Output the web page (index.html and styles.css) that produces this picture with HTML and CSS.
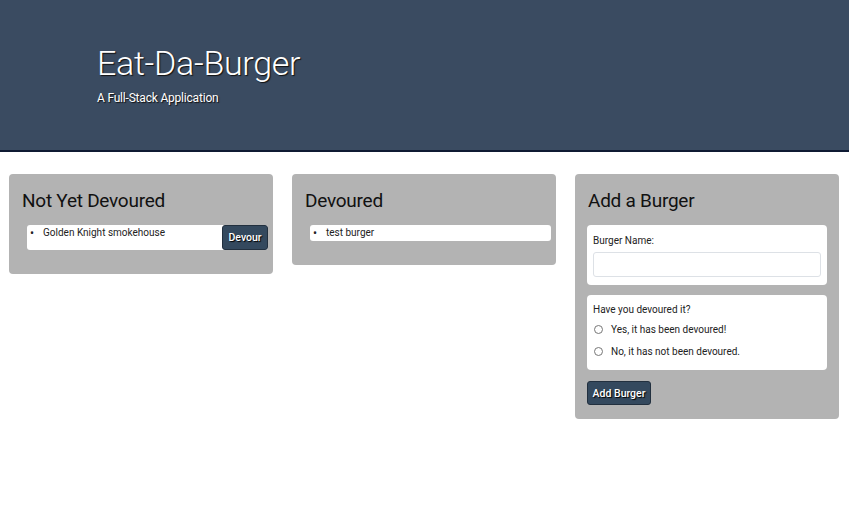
FILE: index.html
```html
<!DOCTYPE html>
<html lang="en">
<head>
<meta charset="utf-8">
<title>Eat-Da-Burger</title>
<link rel="stylesheet" href="styles.css">
</head>
<body>
<header class="hero">
  <h1 class="hero-title">Eat-Da-Burger</h1>
  <p class="hero-sub">A Full-Stack Application</p>
</header>
<main class="columns">
  <section class="card">
    <h2 class="card-title">Not Yet Devoured</h2>
    <ul class="burger-list">
      <li class="burger-item"><span class="burger-name">Golden Knight smokehouse</span><button class="btn btn-devour">Devour</button></li>
    </ul>
  </section>
  <section class="card card-short">
    <h2 class="card-title">Devoured</h2>
    <ul class="burger-list">
      <li class="burger-item"><span class="burger-name">test burger</span></li>
    </ul>
  </section>
  <section class="card">
    <h2 class="card-title">Add a Burger</h2>
    <form class="add-form">
      <div class="form-box">
        <label class="form-label" for="bn">Burger Name:</label>
        <input class="form-input" id="bn" type="text">
      </div>
      <div class="form-box form-box-radios">
        <p class="form-label">Have you devoured it?</p>
        <label class="radio-row"><input type="radio" name="dev" class="radio"><span>Yes, it has been devoured!</span></label>
        <label class="radio-row"><input type="radio" name="dev" class="radio"><span>No, it has not been devoured.</span></label>
      </div>
      <button type="button" class="btn btn-add">Add Burger</button>
    </form>
  </section>
</main>
</body>
</html>
```
FILE: styles.css
```css
* { box-sizing: border-box; }
body {
  margin: 0;
  font-family: Roboto, "Liberation Sans", Arial, sans-serif;
  color: #212529;
  background: #fff;
}
.hero {
  height: 152px;
  background: #3a4b61;
  border-bottom: 2px solid #0f1a33;
  padding: 39px 0 0 97px;
  color: #fff;
}
.hero-title {
  margin: 0;
  font-size: 34px;
  font-weight: 300;
  line-height: 48px;
  letter-spacing: -0.3px;
  text-shadow: 1px 1px 1px #111;
}
.hero-sub {
  margin: 2px 0 0 0;
  font-size: 12px;
  font-weight: 400;
  line-height: 18px;
  letter-spacing: -0.2px;
  text-shadow: 1px 1px 1px #111;
}
.columns {
  display: grid;
  grid-template-columns: repeat(3, 264px);
  gap: 19px;
  padding: 22px 10px 0 9px;
  align-items: start;
}
.card {
  background: #b3b3b3;
  border-radius: 4px;
  padding: 15px 12px 14px 12px;
}
.card-title {
  margin: 0 0 12px 1px;
  font-size: 19px;
  font-weight: 400;
  line-height: 24px;
  letter-spacing: -0.25px;
  color: #111;
}
.burger-list {
  list-style: none;
  margin: 0 -7px 10px 6px;
  padding: 0;
}
.burger-item {
  display: flex;
  align-items: flex-start;
  background: #fff;
  border-radius: 3px;
  font-size: 10px;
  line-height: 16px;
  color: #222;
}
.burger-name {
  flex: 1;
  padding-left: 16px;
  position: relative;
}
.burger-name::before {
  content: "\2022";
  position: absolute;
  left: 3px;
  top: 0;
  font-size: 12px;
}
.btn {
  font-family: inherit;
  background: #34495e;
  color: #fff;
  border: 1px solid #22303f;
  border-radius: 3px;
  font-size: 10.5px;
  font-weight: 500;
  text-shadow: 1px 1px 1px #000;
  cursor: pointer;
}
.btn-devour {
  width: 46px;
  height: 25px;
  padding: 0;
}
.add-form { display: flex; flex-direction: column; align-items: flex-start; }
.form-box {
  align-self: stretch;
  background: #fff;
  border-radius: 4px;
  padding: 8px 6px 8px 6px;
  margin-bottom: 10px;
  font-size: 10px;
  color: #222;
}
.form-box-radios { padding-top: 7px; }
.form-label {
  display: block;
  margin: 0 0 4px 0;
  line-height: 15px;
}
.form-box-radios .form-label { margin-bottom: 1px; }
.form-input {
  display: block;
  width: 100%;
  height: 25px;
  border: 1px solid #dde1e6;
  border-radius: 3px;
  margin: 0;
}
.radio-row {
  display: flex;
  align-items: center;
  height: 22px;
  margin-left: 1px;
}
.radio {
  width: 9px;
  height: 9px;
  margin: 0 8px 0 0;
  accent-color: #888;
}
.btn-add {
  margin-top: 1px;
  width: 64px;
  height: 24px;
  padding: 0;
}
```
